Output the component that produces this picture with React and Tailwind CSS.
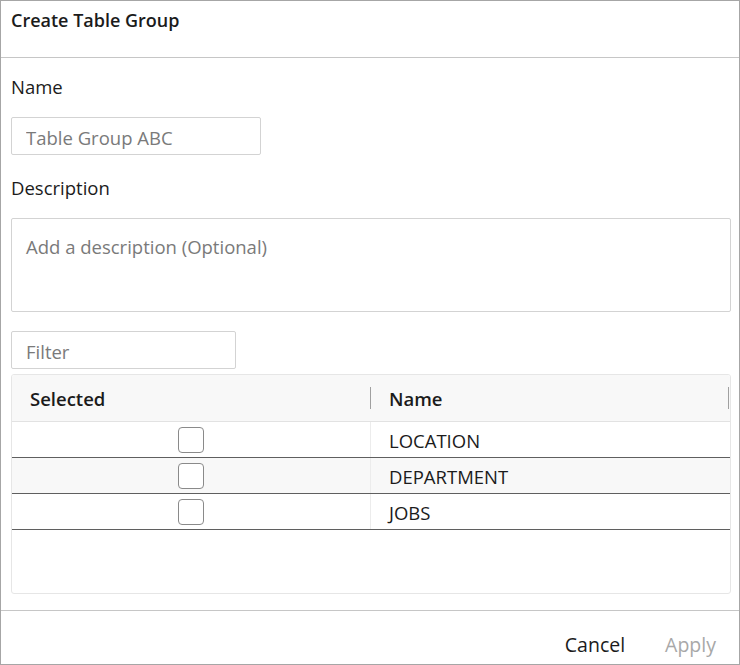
import React from 'react';

const ROWS = ['LOCATION', 'DEPARTMENT', 'JOBS'];

const Checkbox = () => (
  <span className="block w-[26px] h-[26px] rounded-[4px] border border-[#8a8a8a] bg-white" />
);

export default function App() {
  return (
    <div className="w-[740px] h-[665px] border border-[#a6a6a6] bg-white flex flex-col text-[#1b1b1b] font-['Open_Sans',sans-serif]">
      {/* Header */}
      <div className="h-[57px] shrink-0 border-b border-[#c6c6c6] px-[10px] pt-[7px]">
        <h1 className="text-[18px] leading-[24px] font-semibold">Create Table Group</h1>
      </div>

      {/* Body */}
      <div className="flex-1 px-[10px] pt-[17px] flex flex-col">
        <label className="text-[18.5px] leading-[24px]">Name</label>
        <input
          placeholder="Table Group ABC"
          className="mt-[18px] w-[250px] h-[38px] rounded-[2px] border border-[#d3d3d3] px-[14px] pt-[3px] text-[18.5px] placeholder:text-[#7a7a7a] outline-none"
        />
        <label className="mt-[21px] text-[18.5px] leading-[24px]">Description</label>
        <textarea
          placeholder="Add a description (Optional)"
          className="mt-[18px] w-[720px] h-[94px] resize-none rounded-[2px] border border-[#d3d3d3] px-[14px] pt-[15px] text-[18.5px] leading-[26px] placeholder:text-[#7a7a7a] outline-none"
        />
        <input
          placeholder="Filter"
          className="mt-[19px] w-[225px] h-[38px] rounded-[2px] border border-[#d3d3d3] px-[14px] pt-[3px] text-[18.5px] placeholder:text-[#7a7a7a] outline-none"
        />

        {/* Table */}
        <div className="mt-[5px] w-[720px] h-[220px] rounded-[3px] border border-[#e6e6e6] flex flex-col overflow-hidden">
          <div className="h-[47px] shrink-0 flex items-center bg-[#f8f8f8] border-b border-[#e2e2e2] text-[18.5px] font-semibold">
            <div className="w-[359px] flex items-center justify-between pl-[18px]">
              <span className="pt-[2px]">Selected</span>
              <span className="w-px h-[22px] bg-[#a0a0a0]" />
            </div>
            <div className="flex-1 flex items-center justify-between pl-[18px] pr-[1px]">
              <span className="pt-[2px]">Name</span>
              <span className="w-px h-[22px] bg-[#a0a0a0]" />
            </div>
          </div>
          {ROWS.map((name, i) => (
            <div
              key={name}
              className={`h-[36px] shrink-0 flex border-b border-[#5f5f5f] text-[18.5px] ${i === 1 ? 'bg-[#f8f8f8]' : 'bg-white'}`}
            >
              <div className="w-[359px] flex items-center justify-center border-r border-[#ececec]">
                <Checkbox />
              </div>
              <div className="flex-1 flex items-center pl-[18px] pt-[3px]">{name}</div>
            </div>
          ))}
        </div>
      </div>

      {/* Footer */}
      <div className="h-[54px] shrink-0 border-t border-[#c6c6c6] flex justify-end items-start gap-[40px] pr-[23px] pt-[21px] text-[19.5px] leading-[26px]">
        <button className="text-[#1b1b1b]">Cancel</button>
        <button className="text-[#a8a8a8]">Apply</button>
      </div>
    </div>
  );
}
